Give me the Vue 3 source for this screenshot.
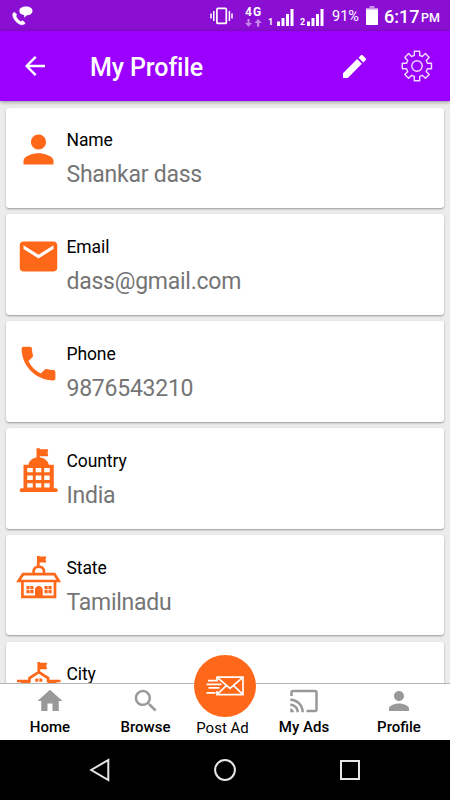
<script setup>
const cards = [
  { label: 'Name', value: 'Shankar dass', icon: 'person' },
  { label: 'Email', value: 'dass@gmail.com', icon: 'mail' },
  { label: 'Phone', value: '9876543210', icon: 'phone' },
  { label: 'Country', value: 'India', icon: 'country' },
  { label: 'State', value: 'Tamilnadu', icon: 'state' },
  { label: 'City', value: '', icon: 'city' },
]
const glyphs = {
  person: 'M12 12c2.21 0 4-1.79 4-4s-1.790-4-4-4-4 1.790-4 4 1.790 4 4 4zm0 2c-2.670 0-8 1.340-8 4v2h16v-2c0-2.660-5.330-4-8-4z',
  mail: 'M20 4H4c-1.100 0-1.990.9-1.990 2L2 18c0 1.100.9 2 2 2h16c1.100 0 2-.9 2-2V6c0-1.100-.9-2-2-2zm0 4l-8 5-8-5V6l8 5 8-5v2z',
  phone: 'M6.620 10.790c1.440 2.830 3.760 5.140 6.590 6.590l2.200-2.200c.27-.27.67-.36 1.020-.24 1.120.37 2.330.57 3.570.57.55 0 1 .45 1 1V20c0 .55-.45 1-1 1-9.390 0-17-7.610-17-17 0-.55.45-1 1-1h3.500c.55 0 1 .45 1 1 0 1.250.2 2.450.57 3.570.11.35.03.74-.25 1.020l-2.200 2.200z',
  home: 'M10 20v-6h4v6h5v-8h3L12 3 2 12h3v8z',
  search: 'M15.500 14h-.79l-.28-.27C15.410 12.590 16 11.110 16 9.500 16 5.910 13.090 3 9.500 3S3 5.910 3 9.500 5.910 16 9.500 16c1.610 0 3.090-.59 4.230-1.570l.27.28v.79l5 4.990L20.490 19l-4.990-5zm-6 0C7.010 14 5 11.990 5 9.500S7.010 5 9.500 5 14 7.010 14 9.500 11.990 14 9.500 14z',
  cast: 'M21 3H3c-1.100 0-2 .9-2 2v3h2V5h18v14h-7v2h7c1.100 0 2-.9 2-2V5c0-1.100-.9-2-2-2zM1 18v3h3c0-1.660-1.340-3-3-3zm0-4v2c2.760 0 5 2.240 5 5h2c0-3.870-3.130-7-7-7zm0-4v2c4.970 0 9 4.030 9 9h2c0-6.080-4.930-11-11-11z',
}
const tabs = [
  { label: 'Home', icon: 'home' },
  { label: 'Browse', icon: 'search' },
  { label: 'Post Ad', fab: true },
  { label: 'My Ads', icon: 'cast' },
  { label: 'Profile', icon: 'person' },
]
</script>

<template>
  <div class="screen">
    <div class="status">
      <svg class="call" viewBox="0 0 22 20" width="22" height="20">
        <path d="M2.200 6.200 4.600 8.200 4 10.200C5 12.600 6.600 14.300 8.600 15.500L11 14.800 13.200 17.300C11.500 19.200 9 19.200 6.500 17.500 2.500 15 .4 11 .8 7.800Z" fill="#fff" stroke="#fff" stroke-width=".6" stroke-linejoin="round" />
        <path d="M14 0.500C17.700.5 20.500 2.200 20.500 5S17.700 9.400 14.500 9.400L12.200 11.800V9.200C9.300 8.600 7.300 7.200 7.300 5 7.300 2.200 10.300.5 14 .5Z" fill="#fff" />
      </svg>
      <svg class="vibrate" viewBox="0 0 24 18" width="24" height="18">
        <rect x="6.900" y="1.400" width="9.400" height="15" rx="1" fill="none" stroke="#fff" stroke-width="1.700" />
        <path d="M3.800 4V14M1 6.500V11.500M19.400 4V14M22 6.500V11.500" stroke="#fff" stroke-width="1.500" />
      </svg>
      <div class="net">
        <span class="fourg">4G</span>
        <svg viewBox="0 0 17 8" width="17" height="8" fill="#c58ae8">
          <path d="M2.500 0h2v4H7L3.500 7.800 0 4h2.500zM12 7.800h2.200V3.900h2.500L13.100 0 9.500 3.900H12z" />
        </svg>
      </div>
      <span class="sim">1</span>
      <svg class="bars" viewBox="0 0 17 17" width="17" height="17" fill="#fff">
        <path d="M0 12.500h3V17H0zM4.500 9h3v8h-3zM9 5h3v12H9zM13.500 0h3v17h-3z" />
      </svg>
      <span class="sim second">2</span>
      <svg class="bars" viewBox="0 0 17 17" width="17" height="17" fill="#fff">
        <path d="M0 12.500h3V17H0zM4.500 9h3v8h-3zM9 5h3v12H9zM13.500 0h3v17h-3z" />
      </svg>
      <span class="pct">91%</span>
      <svg class="battery" viewBox="0 0 12 19" width="12" height="19">
        <path d="M3.500 0h5v2H12v2H0V2h3.500z" fill="#c98fea" />
        <path d="M0 3.500h12V19H0z" fill="#fff" />
      </svg>
      <span class="time">6:17</span><span class="pm">PM</span>
    </div>

    <header class="appbar">
      <svg class="back" viewBox="0 0 20 20" width="20" height="20" fill="none" stroke="#fff" stroke-width="2.400">
        <path d="M20 10H2M10.700.9 1.600 10l9.100 9.100" />
      </svg>
      <h1>My Profile</h1>
      <svg class="edit" viewBox="3 3 18 18" width="23" height="23" fill="#fff">
        <path d="M3 17.250V21h3.750L17.810 9.940l-3.750-3.750L3 17.250zM20.710 7.040c.39-.39.39-1.020 0-1.410l-2.340-2.340c-.39-.39-1.020-.39-1.410 0l-1.830 1.830 3.750 3.750 1.830-1.830z" />
      </svg>
      <svg class="gear" viewBox="0 0 32 32" width="32" height="32" fill="none" stroke="#f0dcff" stroke-width="1.400" stroke-linejoin="round">
        <path d="M13.300 1.200h5.400v4.200l2.600 1.100 3.100-3 3.800 3.900-3 3.100 1.200 2.700h4.100v5.500h-4.100l-1.200 2.700 3 3.100-3.800 3.800-3.100-3-2.600 1.100v4.300h-5.400v-4.300l-2.700-1.100-3 3-3.800-3.800 2.900-3.100-1.100-2.700H1.300v-5.500h4.300l1.100-2.700-2.900-3.100 3.800-3.900 3 3 2.700-1.100z" />
        <circle cx="16" cy="16" r="5.200" />
      </svg>
    </header>

    <main class="list">
      <section v-for="c in cards" :key="c.label" class="card">
        <svg v-if="glyphs[c.icon]" class="icon" viewBox="0 0 24 24"><path :d="glyphs[c.icon]" /></svg>
        <svg v-else-if="c.icon === 'country'" class="icon" viewBox="0 0 45 45">
          <path d="M20.500.2h3.300v1h8.400l-.6 3.500.6 3.600h-8.400v1.300c5 .6 8.300 3.400 9 7.100h5v23.600h2.100a1.800 1.800 0 0 1 0 3.700H5.500a1.800 1.800 0 0 1 0-3.700h2V16.700h5c.7-3.700 3.500-6.400 8-7.100z" />
          <path class="hole" d="M11.200 20h5.600v4.300h-5.600zM19.700 20h5.600v4.300h-5.600zM28.200 20h5.500v4.300h-5.500zM11.200 27.600h5.600v4.300h-5.600zM19.700 27.600h5.600v4.300h-5.600zM28.200 27.600h5.500v4.300h-5.500zM11.200 35.200h5.600v4.200h-5.600zM19.700 35.200h5.600v4.200h-5.600zM28.200 35.200h5.500v4.200h-5.500z" />
        </svg>
        <svg v-else-if="c.icon === 'state'" class="icon" viewBox="0 0 45 45">
          <path class="line" d="M7 19.200h31.500l4.300 6.800H2.600zM6.400 26v15.900h32.600V26M17.600 19v-2.500c0-6.600 10.400-6.600 10.400 0V19M22.300 11V1" />
          <path d="M22 1.500h8.400L29.500 4.500l.9 3H22zM19 43V34.500c0-4.800 7.700-4.800 7.700 0V43z" />
          <path d="M10.400 31h3.200v3.200h-3.200zM14.300 31h3.200v3.200h-3.200zM10.400 35h3.200v3.200h-3.200zM14.300 35h3.200v3.200h-3.200zM28.500 31h3.200v3.200h-3.200zM32.400 31h3.200v3.200h-3.200zM28.500 35h3.200v3.200h-3.200zM32.400 35h3.200v3.200h-3.200z" />
        </svg>
        <svg v-else class="icon" viewBox="0 0 45 45">
          <path class="line" d="M22.800 11V1M1 20h12.500v-3l9.300-6 9.300 6v3h12.400" />
          <path d="M22 1.800h9.200L30.200 5l1 3.200H22zM19.300 17.500h3v3.200h-3zM23.300 17.500h3v3.200h-3zM5 21h9v20H5zM31.500 21h9v20h-9z" />
        </svg>
        <div class="text">
          <div class="label">{{ c.label }}</div>
          <div class="value">{{ c.value }}</div>
        </div>
      </section>
    </main>

    <nav class="tabs">
      <div v-for="t in tabs" :key="t.label" class="tab" :class="{ post: t.fab }">
        <div v-if="t.fab" class="fab">
          <svg viewBox="0 0 38 20" width="38" height="20" fill="none" stroke="#fff" stroke-width="1.700">
            <path d="M11 5V1.200h26v17.500H11V15M11.500 1.700 24 12.300 36.500 1.700M11.500 18.200l8.800-8.500M36.500 18.200l-8.800-8.500M2 4.700h10M.5 8.300h15M2.500 11.800h11M.5 16.800h9" />
          </svg>
        </div>
        <svg v-else class="tabicon" viewBox="0 0 24 24"><path :d="glyphs[t.icon]" /></svg>
        <span>{{ t.label }}</span>
      </div>
    </nav>

    <div class="system">
      <svg viewBox="0 0 22 24" width="22" height="24"><path d="M19.300 2v20L2.200 12z" /></svg>
      <svg viewBox="0 0 22 24" width="22" height="24"><circle cx="11" cy="12" r="9.900" /></svg>
      <svg viewBox="0 0 22 24" width="22" height="24"><rect x="2" y="3" width="18" height="18" /></svg>
    </div>
  </div>
</template>

<style>
body {
  margin: 0;
}
</style>

<style scoped>
.screen {
  width: 450px;
  height: 800px;
  display: flex;
  flex-direction: column;
  overflow: hidden;
  background: #ececec;
  font-family: Roboto, sans-serif;
}
svg {
  display: block;
  flex: none;
}
.status {
  flex: none;
  height: 31px;
  display: flex;
  align-items: flex-start;
  background: #8a0fd3;
  color: #fff;
  line-height: 1;
}
.call {
  margin: 6px 0 0 12px;
}
.vibrate {
  margin: 7px 0 0 176px;
}
.net {
  width: 17px;
  margin: 6px 0 0 11px;
}
.net svg {
  margin-top: 1px;
}
.fourg {
  display: block;
  font-size: 12px;
  font-weight: 700;
  letter-spacing: 1px;
}
.sim {
  width: 6px;
  margin: 18px 3px 0 6px;
  font-size: 9px;
  font-weight: 700;
}
.sim.second {
  width: 5px;
  margin: 18px 2px 0 6px;
}
.bars {
  margin-top: 9px;
}
.pct {
  width: 28px;
  margin: 10px 0 0 8px;
  font-size: 14.500px;
  white-space: nowrap;
}
.battery {
  margin: 6px 0 0 6px;
}
.time {
  width: 34px;
  margin: 8px 0 0 6px;
  font-size: 18px;
  font-weight: 500;
  white-space: nowrap;
}
.pm {
  margin: 12px 0 0 3px;
  font-size: 12.500px;
  font-weight: 500;
}
.appbar {
  flex: none;
  height: 70px;
  display: flex;
  align-items: center;
  background: #9b00ff;
  color: #fff;
  box-shadow: 0 1px 4px rgba(0, 0, 0, 0.4);
  z-index: 1;
}
.back {
  margin-left: 25px;
}
h1 {
  width: 253px;
  margin: 4px 0 0 45px;
  font-size: 25px;
  letter-spacing: -0.1px;
  font-weight: 500;
  line-height: 30px;
}
.edit {
  margin-top: 0;
}
.gear {
  margin-left: 35px;
}
.list {
  flex: 1;
  min-height: 0;
  overflow: hidden;
  display: flex;
  flex-direction: column;
  gap: 6.300px;
  padding: 6.700px 6px 0;
}
.card {
  flex: none;
  box-sizing: border-box;
  height: 100.500px;
  display: flex;
  align-items: flex-start;
  gap: 6px;
  padding: 19.700px 0 0 9.500px;
  border-radius: 3px;
  background: #fff;
  box-shadow: 0 1px 2px rgba(0, 0, 0, 0.36);
}
.icon {
  width: 45px;
  height: 45px;
  fill: #ff6719;
}
.line {
  fill: none;
  stroke: #ff6719;
  stroke-width: 2.700;
}
.hole {
  fill: #fff;
}
.label {
  margin-top: 3px;
  font-size: 17.500px;
  letter-spacing: -0.1px;
  line-height: 20px;
  color: #000;
}
.value {
  margin-top: 10px;
  font-size: 23px;
  letter-spacing: -0.250px;
  line-height: 30px;
  color: #757575;
}
.tabs {
  flex: none;
  box-sizing: border-box;
  height: 57px;
  display: grid;
  grid-template-columns: 100px 91px 63px 100px 90px;
  border-top: 1px solid #b5b5b5;
  background: #fff;
}
.tab {
  position: relative;
  display: flex;
  flex-direction: column;
  align-items: center;
  font-size: 15px;
  font-weight: 500;
  line-height: 18px;
  color: #000;
}
.tabicon {
  width: 30px;
  height: 30px;
  margin: 2px 0 2px;
  fill: #999;
}
.post {
  padding-top: 35px;
  font-weight: 400;
}
.fab {
  position: absolute;
  top: -29.500px;
  left: 3px;
  width: 62px;
  height: 62px;
  display: flex;
  align-items: center;
  justify-content: center;
  border-radius: 50%;
  background: #ff6719;
}
.system {
  flex: none;
  height: 60px;
  display: flex;
  align-items: center;
  justify-content: center;
  gap: 103px;
  background: #000;
}
.system svg {
  fill: none;
  stroke: #e6e6e6;
  stroke-width: 2;
}
</style>
